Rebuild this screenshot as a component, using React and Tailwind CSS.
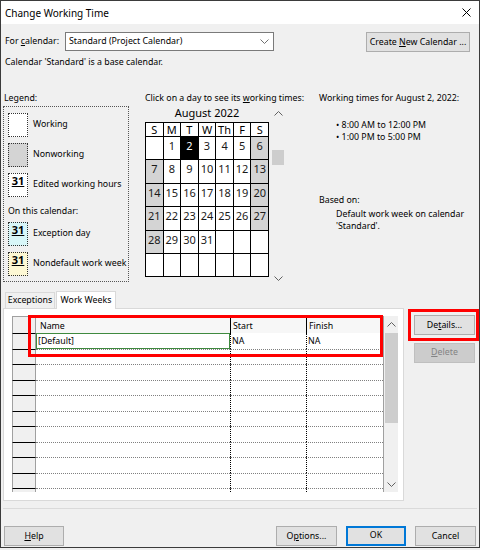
import React from "react";

function Chev({ up = false, color = "#606060" }) {
  return (
    <svg width="9" height="5" viewBox="0 0 9 5" className="block">
      <polyline
        points={up ? "0.5,4.5 4.5,0.5 8.5,4.5" : "0.5,0.5 4.5,4.5 8.5,0.5"}
        fill="none"
        stroke={color}
        strokeWidth="1"
      />
    </svg>
  );
}

function Btn({ children, className = "" }) {
  return (
    <div
      className={`bg-[#e1e1e1] border border-[#adadad] flex items-center justify-center leading-[12px] whitespace-nowrap ${className}`}
    >
      {children}
    </div>
  );
}

function Swatch({ bg, num }) {
  return (
    <div
      className={`w-[20px] h-[24px] shrink-0 border border-dotted border-[#333] flex justify-center ${bg}`}
    >
      {num ? (
        <span className="font-bold text-[11px] leading-[12px] underline mt-[1px]">31</span>
      ) : null}
    </div>
  );
}

function LegendRow({ bg, num, label, className = "" }) {
  return (
    <div className={`flex items-center h-[24px] ${className}`}>
      <Swatch bg={bg} num={num} />
      <span className="ml-[5px] whitespace-nowrap">{label}</span>
    </div>
  );
}

const weeks = [
  [null, 1, 2, 3, 4, 5, 6],
  [7, 8, 9, 10, 11, 12, 13],
  [14, 15, 16, 17, 18, 19, 20],
  [21, 22, 23, 24, 25, 26, 27],
  [28, 29, 30, 31, null, null, null],
  [null, null, null, null, null, null, null],
];

function Calendar() {
  const heads = ["S", "M", "T", "W", "Th", "F", "S"];
  const cells = [];
  heads.forEach((h, i) =>
    cells.push(
      <div key={"h" + i} className="bg-white text-center text-[11px] leading-[13px]">
        {h}
      </div>
    )
  );
  weeks.forEach((row, r) =>
    row.forEach((d, c) => {
      const gray = d !== null && (c === 0 || c === 6);
      const sel = d === 2;
      const cls = sel
        ? "bg-black text-white"
        : gray
        ? "bg-[#d4d4d4] text-[#1a1a1a]"
        : "bg-white text-[#1a1a1a]";
      cells.push(
        <div key={r + "-" + c} className={`${cls} text-center text-[11px] leading-[13px] pt-[2px]`}>
          {d === null ? "" : d}
        </div>
      );
    })
  );
  return (
    <div className="w-[124px] bg-black p-px grid grid-cols-7 gap-px grid-rows-[13px_repeat(6,22.4px)]">
      {cells}
    </div>
  );
}

function Table() {
  const rows = [0, 1, 2, 3, 4, 5, 6, 7, 8, 9];
  return (
    <div className="relative w-[386px] h-[176px] flex">
      <div className="w-[371px] flex flex-col overflow-hidden">
        <div className="h-[17px] flex border-t border-[#a0a0a0] shrink-0">
          <div className="w-[24px] bg-[#f0f0f0] border-x border-[#a0a0a0]" />
          <div className="w-[194px] bg-[#f7f7f7] pl-[4px] pt-[3px] leading-[12px]">Name</div>
          <div className="w-[76px] bg-[#f7f7f7] border-l border-black pl-[2px] pt-[3px] leading-[12px]">Start</div>
          <div className="w-[77px] bg-[#f7f7f7] border-l border-black pl-[2px] pt-[3px] leading-[12px]">Finish</div>
        </div>
        {rows.map((i) => (
          <div key={i} className={`flex shrink-0 ${i % 2 === 0 ? "h-[16px]" : "h-[15px]"}`}>
            <div className="w-[24px] bg-[#f0f0f0] border-x border-x-[#a0a0a0] border-t border-t-black" />
            {i === 0 ? (
              <>
                <div className="w-[194px] border border-[#3f8a3f] pl-[1px] flex items-center leading-[12px]">
                  [Default]
                </div>
                <div className="w-[76px] border-l border-dotted border-l-black pl-px flex items-center leading-[12px]">
                  NA
                </div>
                <div className="w-[77px] border-l border-dotted border-l-black pl-px flex items-center leading-[12px]">
                  NA
                </div>
              </>
            ) : (
              <>
                <div className="w-[194px] border-t border-dotted border-t-[#808080]" />
                <div className="w-[76px] border-t border-l border-dotted border-t-[#808080] border-l-black" />
                <div className="w-[77px] border-t border-l border-dotted border-t-[#808080] border-l-black" />
              </>
            )}
          </div>
        ))}
        <div className="flex h-[4px] shrink-0">
          <div className="w-[24px] bg-[#f0f0f0] border-x border-x-[#a0a0a0] border-t border-t-black" />
          <div className="w-[194px] border-t border-dotted border-t-[#808080]" />
          <div className="w-[76px] border-t border-l border-dotted border-t-[#808080] border-l-black" />
          <div className="w-[77px] border-t border-l border-dotted border-t-[#808080] border-l-black" />
        </div>
      </div>
      <div className="w-[15px] bg-[#f0f0f0] border-l border-[#a0a0a0] flex flex-col items-center">
        <div className="h-[17px] flex items-center">
          <Chev up />
        </div>
        <div className="w-[13px] h-[90px] bg-[#cdcdcd]" />
        <div className="flex-1" />
        <div className="h-[15px] flex items-center">
          <Chev />
        </div>
      </div>
      <div className="absolute left-[16px] top-[-1px] w-[355px] h-[42px] border-[3px] border-[#ff0000]" />
    </div>
  );
}

export default function App() {
  return (
    <div className="w-[480px] h-[550px] bg-[#f0f0f0] text-[8.8px] text-black font-['Noto_Sans','Open_Sans',sans-serif]">
      <div className="w-[480px] h-[548px] border border-[#3b3b3b] bg-[#f0f0f0] flex flex-col">
        {/* Title bar */}
        <div className="h-[23px] shrink-0 bg-white flex items-center justify-between pl-[4px] pr-[8px]">
          <span className="text-[10px] leading-[12px]">Change Working Time</span>
          <svg width="9" height="9" viewBox="0 0 9 9" className="block">
            <path d="M0.5 0.5L8.5 8.5M8.5 0.5L0.5 8.5" stroke="#000" strokeWidth="1" />
          </svg>
        </div>

        {/* For calendar row */}
        <div className="mt-[8px] h-[20px] shrink-0 flex items-start pl-[4px] pr-[9px]">
          <div className="w-[60px] h-[19px] flex items-center">
            <span>
              For <span className="underline">c</span>alendar:
            </span>
          </div>
          <div className="w-[209px] h-[19px] bg-white border border-[#7a7a7a] flex items-center justify-between pl-[3px] pr-[4px]">
            <span>Standard (Project Calendar)</span>
            <Chev color="#707070" />
          </div>
          <div className="flex-1" />
          <Btn className="w-[104px] h-[20px]">
            <span>
              Create <span className="underline">N</span>ew Calendar ...
            </span>
          </Btn>
        </div>

        <div className="mt-[4px] h-[12px] leading-[12px] pl-[4px] shrink-0">
          Calendar 'Standard' is a base calendar.
        </div>

        {/* Main area */}
        <div className="mt-[24px] flex shrink-0">
          {/* Legend */}
          <div className="ml-[2px] w-[126px]">
            <div className="h-[12px] leading-[12px] pl-[1px]">Legend:</div>
            <div className="mt-[2px] h-[176px] border border-dotted border-[#555] pl-[4px] pt-[6px]">
              <LegendRow bg="bg-white" label="Working" />
              <LegendRow bg="bg-[#d4d4d4]" label="Nonworking" className="mt-[6px]" />
              <LegendRow bg="bg-white" num label="Edited working hours" className="mt-[6px]" />
              <div className="mt-[8px] h-[12px] leading-[12px]">On this calendar:</div>
              <LegendRow bg="bg-[#d8f6f8]" num label="Exception day" className="mt-[5px]" />
              <LegendRow bg="bg-[#fdf8d4]" num label="Nondefault work week" className="mt-[6px]" />
            </div>
          </div>

          {/* Calendar */}
          <div className="ml-[16px] w-[174px]">
            <div className="h-[12px] leading-[12px] whitespace-nowrap">
              Click on a day to see its <span className="underline">w</span>orking times:
            </div>
            <div className="mt-[2px] flex">
              <div className="w-[124px]">
                <div className="h-[14px] leading-[14px] text-[11px] text-center">August 2022</div>
                <div className="mt-[2px]">
                  <Calendar />
                </div>
              </div>
              <div className="ml-[2px] w-[14px] h-[179px] flex flex-col items-center">
                <div className="h-[14px] flex items-center">
                  <Chev up />
                </div>
                <div className="mt-[30px] w-[12px] h-[15px] bg-[#cdcdcd]" />
                <div className="flex-1" />
                <div className="h-[14px] flex items-center">
                  <Chev />
                </div>
              </div>
            </div>
          </div>

          {/* Right info */}
          <div className="flex-1">
            <div className="h-[12px] leading-[12px] whitespace-nowrap">Working times for August 2, 2022:</div>
            <div className="mt-[15px] pl-[17px] h-[12px] leading-[12px]">• 8:00 AM to 12:00 PM</div>
            <div className="pl-[17px] h-[12px] leading-[12px]">• 1:00 PM to 5:00 PM</div>
            <div className="mt-[51px] h-[12px] leading-[12px]">Based on:</div>
            <div className="mt-[2px] pl-[17px] leading-[12px]">
              Default work week on calendar
              <br />
              'Standard'.
            </div>
          </div>
        </div>

        {/* Tabs area */}
        <div className="mt-[6px] flex shrink-0">
          <div className="ml-[2px] w-[401px] flex flex-col">
            <div className="h-[17px] flex items-end">
              <div className="ml-[2px] w-[50px] h-[16px] border border-b-0 border-[#d9d9d9] bg-[#f0f0f0] flex items-center justify-center">
                Exceptions
              </div>
              <div className="ml-[1px] w-[60px] h-[18px] -mb-px relative z-10 bg-white border border-b-0 border-[#d9d9d9] flex items-center justify-center">
                Work Weeks
              </div>
            </div>
            <div className="h-[193px] bg-white border border-[#d9d9d9] pl-[8px] pt-[7px]">
              <Table />
            </div>
          </div>
          <div className="ml-[10px] w-[61px] flex flex-col">
            <div className="mt-[24px] relative">
              <Btn className="w-[61px] h-[20px]">
                <span>
                  De<span className="underline">t</span>ails...
                </span>
              </Btn>
              <div className="absolute left-[-6px] top-[-6px] w-[71px] h-[32px] border-[3px] border-[#ff0000]" />
            </div>
            <div className="mt-[8px] w-[61px] h-[20px] bg-[#cccccc] border border-[#bfbfbf] flex items-center justify-center text-[#838383]">
              <span>
                <span className="underline">D</span>elete
              </span>
            </div>
          </div>
        </div>

        {/* Separator */}
        <div className="mt-[7px] mx-[2px] h-px bg-[#dadada] shrink-0" />

        {/* Bottom buttons */}
        <div className="mt-[17px] flex pl-[3px] pr-[3px] shrink-0">
          <Btn className="w-[60px] h-[20px]">
            <span>
              <span className="underline">H</span>elp
            </span>
          </Btn>
          <div className="flex-1" />
          <Btn className="w-[61px] h-[20px]">
            <span>
              O<span className="underline">p</span>tions...
            </span>
          </Btn>
          <div className="ml-[9px] w-[60px] h-[20px] bg-[#e1e1e1] border border-[#0078d7] shadow-[inset_0_0_0_1px_#0078d7] flex items-center justify-center">
            OK
          </div>
          <Btn className="ml-[9px] w-[61px] h-[20px]">Cancel</Btn>
        </div>
      </div>
    </div>
  );
}
